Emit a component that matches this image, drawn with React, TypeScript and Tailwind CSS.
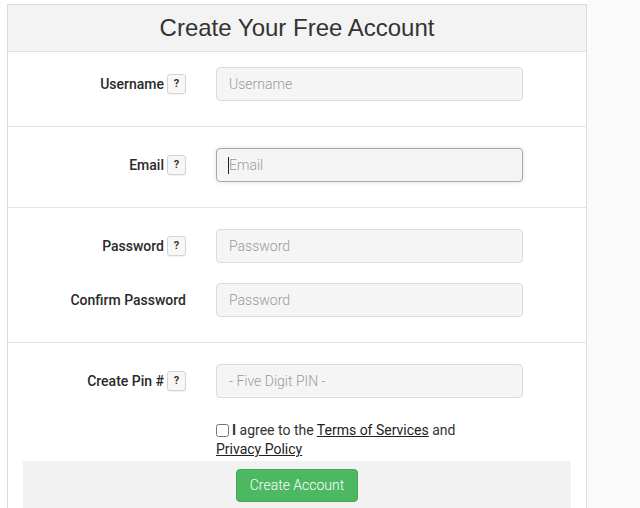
import React from "react";

const roboto = { fontFamily: "Roboto, 'Liberation Sans', sans-serif" } as const;

function Help() {
  return (
    <span className="ml-[3px] inline-flex h-[20px] w-[19px] items-center justify-center rounded-[3px] border border-[#d4d4d4] bg-[#f7f7f7] text-[11px] font-bold text-[#333] shadow-[0_1px_1px_rgba(0,0,0,0.06)]">
      ?
    </span>
  );
}

function Row({
  label,
  help = true,
  placeholder,
  focused = false,
  type = "text",
}: {
  label: string;
  help?: boolean;
  placeholder: string;
  focused?: boolean;
  type?: string;
}) {
  return (
    <div className="flex items-center">
      <div className="flex w-[178px] items-center justify-end text-[14px] font-medium text-[#2a2a2a]">
        <span>{label}</span>
        {help && <Help />}
      </div>
      <div className="relative ml-[30px] w-[307px]">
        <input
          type={type}
          placeholder={placeholder}
          readOnly
          className={
            "block h-[34px] w-full rounded-[4px] border bg-[#f5f5f5] px-[12px] text-[14px] font-light text-[#555] outline-none placeholder:text-[#9a9a9a] " +
            (focused
              ? "border-[#a8a8a8] shadow-[0_0_5px_rgba(0,0,0,0.12)]"
              : "border-[#dcdcdc]")
          }
          style={roboto}
        />
        {focused && (
          <span className="absolute left-[12px] top-[9px] h-[17px] w-px bg-[#222]" />
        )}
      </div>
    </div>
  );
}

export default function App() {
  return (
    <div className="flex min-h-[508px] w-[640px] overflow-hidden bg-white" style={roboto}>
      <div className="w-[7px] shrink-0 bg-white" />
      <div className="mt-[4px] flex w-[580px] shrink-0 flex-col border border-b-0 border-[#dcdcdc] bg-white">
        <div
          className="flex h-[47px] items-center justify-center border-b border-[#e0e0e0] bg-[#f3f3f3] text-[24px] text-[#333]"
          style={{ fontFamily: "'Liberation Sans', Arial, sans-serif" }}
        >
          Create Your Free Account
        </div>
        <div className="border-b border-[#e6e6e6] pt-[15px] pb-[25px]">
          <Row label="Username" placeholder="Username" />
        </div>
        <div className="border-b border-[#e6e6e6] pt-[21px] pb-[25px]">
          <Row label="Email" placeholder="Email" focused />
        </div>
        <div className="flex flex-col gap-[20px] border-b border-[#e6e6e6] pt-[21px] pb-[25px]">
          <Row label="Password" placeholder="Password" type="password" />
          <Row label="Confirm Password" help={false} placeholder="Password" type="password" />
        </div>
        <div className="pt-[21px]">
          <Row label="Create Pin #" placeholder="- Five Digit PIN -" />
          <div className="ml-[208px] mt-[23px] w-[307px] text-[14px] leading-[19px] text-[#333]">
            <input
              type="checkbox"
              className="mr-[3px] inline-block h-[13px] w-[13px] align-[-2px]"
            />
            <span className="font-bold">I</span> agree to the{" "}
            <a className="text-[#222] underline">Terms of Services</a> and{" "}
            <a className="whitespace-nowrap text-[#222] underline">Privacy Policy</a>
          </div>
          <div className="mx-[15px] mt-[2px] flex h-[60px] justify-center bg-[#f2f2f2] pt-[8px]">
            <button className="h-[33px] w-[122px] rounded-[4px] border border-[#43a856] bg-[#4cb862] text-[14px] font-light text-white">
              Create Account
            </button>
          </div>
        </div>
      </div>
      <div className="flex-1 bg-[#fafafa]" />
    </div>
  );
}
